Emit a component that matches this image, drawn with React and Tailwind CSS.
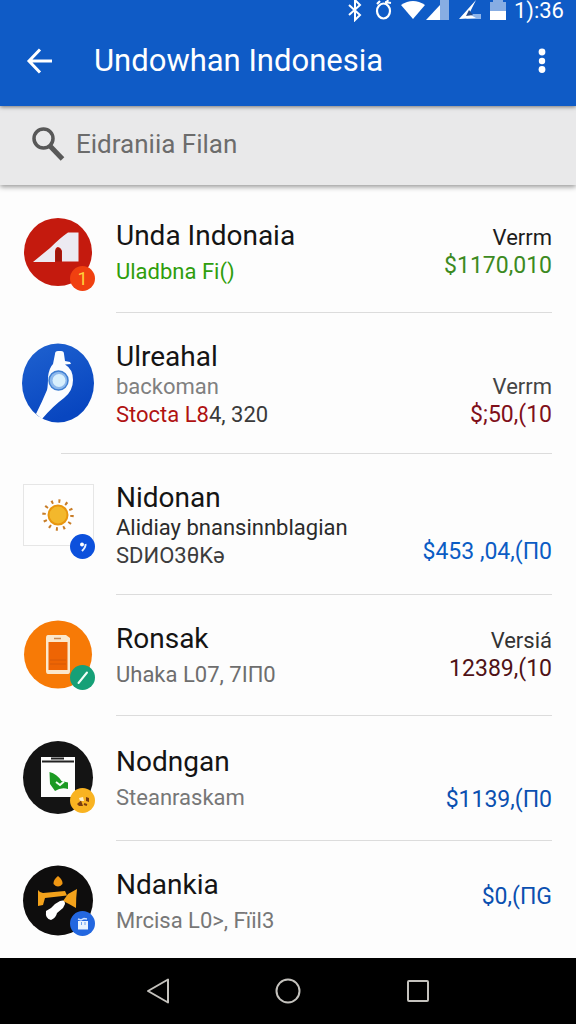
import { clsx } from "clsx";

const rows = [
  {
    id: "unda",
    name: "Unda Indonaia",
    details: [{ text: "Uladbna Fi()", className: "text-[#2f9e0c]" }],
    label: "Verrm",
    labelClass: "text-[#1c1c1c]",
    amount: "$1170,010",
    amountClass: "text-[#3c8a22]",
    sideClass: "self-start pt-3",
    rowClass: "py-5",
    avatar: <RedAvatar />,
    badge: <OneBadge />,
  },
  {
    id: "ulreahal",
    name: "Ulreahal",
    details: [
      { text: "backoman", className: "text-[#808080]" },
      { text: "Stocta L8", className: "text-[#b01212]", rest: "4, 320" },
    ],
    label: "Verrm",
    labelClass: "text-[#444444]",
    amount: "$;50,(10",
    amountClass: "text-[#80101a]",
    sideClass: "self-end",
    rowClass: "py-6",
    dividerClass: "ml-[61px]",
    avatar: <BlueAvatar />,
  },
  {
    id: "nidonan",
    name: "Nidonan",
    details: [
      { text: "Alidiay bnansinnblagian", className: "text-[#2b2b2b]" },
      { text: "SDИO3θKə", className: "text-[#3c3c3c]" },
    ],
    amount: "$453 ,04,(П0",
    amountClass: "text-[#0b5cc4]",
    sideClass: "self-end pb-1",
    rowClass: "py-6",
    avatar: <SunAvatar />,
    badge: <DotBadge />,
  },
  {
    id: "ronsak",
    name: "Ronsak",
    details: [{ text: "Uhaka L07, 7IП0", className: "text-[#6e6e6e]" }],
    label: "Versiá",
    labelClass: "text-[#333333]",
    amount: "12389,(10",
    amountClass: "text-[#4f1216]",
    sideClass: "self-start pt-3",
    rowClass: "py-5",
    avatar: <PhoneAvatar />,
    badge: <PenBadge />,
  },
  {
    id: "nodngan",
    name: "Nodngan",
    details: [{ text: "Steanraskam", className: "text-[#777777]" }],
    amount: "$1139,(П0",
    amountClass: "text-[#0b50b0]",
    sideClass: "self-end pb-1",
    rowClass: "py-[22px]",
    avatar: <LeafAvatar />,
    badge: <CoinBadge />,
  },
  {
    id: "ndankia",
    name: "Ndankia",
    details: [{ text: "Mrcisa L0>, Fïil3", className: "text-[#777777]" }],
    amount: "$0,(ПG",
    amountClass: "text-[#0b50b0]",
    sideClass: "self-center pb-2",
    rowClass: "pt-5 pb-4",
    avatar: <ToolAvatar />,
    badge: <BagBadge />,
  },
];

function Avatar({ children }) {
  return (
    <svg viewBox="0 0 72 80" className="h-20 w-18" aria-hidden="true">
      {children}
    </svg>
  );
}

function RedAvatar() {
  return (
    <Avatar>
      <circle cx="36" cy="40" r="34" fill="#c41a0e" />
      <path d="M11 50 L28 36 Q38 26 46 20.500 H56.500 V49.500 H40 V39 Q38.500 35 35.500 35 Q33 36 33 40 V50 Z" fill="#eceaf2" />
      <path d="M33.500 49.500 V39 Q36.500 33 39.500 39 V49.500 Z" fill="#9c160c" />
    </Avatar>
  );
}

function BlueAvatar() {
  return (
    <Avatar>
      <defs>
        <linearGradient id="blueFill" x1="0" y1="0" x2="0.4" y2="1">
          <stop offset="0" stopColor="#1f62d0" />
          <stop offset="1" stopColor="#0846c0" />
        </linearGradient>
      </defs>
      <ellipse cx="36" cy="40" rx="36" ry="39.500" fill="url(#blueFill)" />
      <path
        d="M33 11 Q33 8 36 8 H39 Q42 8 42 11 L43 18 L48 19 L49 21 L43 21.500 Q51 26 51 37 Q51 48 42 55 Q31 63 20 76 L14 71 Q20 59 25 47 Q26 43 26 34 Q27 25 31 21 Z"
        fill="#fbfdff"
      />
      <circle cx="36.500" cy="37.500" r="9.500" fill="#8db9ec" stroke="#3e7fd2" strokeWidth="1.500" />
      <circle cx="37" cy="37.500" r="6.500" fill="#d8f0fd" />
    </Avatar>
  );
}

function SunAvatar() {
  return (
    <Avatar>
      <rect x="1.500" y="0.5" width="70" height="61" fill="#fefefe" stroke="#e6e6e6" />
      <circle cx="36" cy="31" r="14" fill="none" stroke="#c87d28" strokeWidth="3.500" strokeDasharray="2 5.330" />
      <circle cx="36" cy="31" r="9.500" fill="#f3b82c" stroke="#e8960f" strokeWidth="2" />
    </Avatar>
  );
}

function PhoneAvatar() {
  return (
    <Avatar>
      <circle cx="36" cy="39.500" r="34" fill="#f77a06" />
      <path d="M26 20 H44 L48 23 V56 Q48 59 46 59 H26 Q24 59 24 56 V23 Q24 20 26 20 Z" fill="#fbe8cc" />
      <rect x="26.500" y="27" width="19" height="28" fill="#ee6504" />
      <path d="M32 23.500 h7" stroke="#c98a54" strokeWidth="1.500" />
      <path d="M28 45 h16 M28 49 h16" stroke="#d65a06" />
    </Avatar>
  );
}

function LeafAvatar() {
  return (
    <Avatar>
      <ellipse cx="36" cy="39.500" rx="35" ry="36.500" fill="#141414" />
      <rect x="19" y="19" width="34" height="40" fill="#fdfdfd" />
      <path d="M20 23.500 h32 M29 20.500 h13" stroke="#222" strokeWidth="2" />
      <path d="M27.500 34 Q35 36 39.500 43 L46 44.500 L46 51 Q39 49 33 53 L28 46 Z" fill="#1b9a22" />
      <path d="M34 44 L38 47 L42 43.500" fill="none" stroke="#f2fff2" strokeWidth="2" />
    </Avatar>
  );
}

function ToolAvatar() {
  return (
    <Avatar>
      <circle cx="36" cy="39.500" r="35" fill="#0e0d0d" />
      <path d="M36 15 Q41 19 40.500 23 Q36 28 31.500 23 Q31 19 36 15 Z" fill="#ef9612" />
      <path d="M16 29 Q18 32 21 32 L43 30 L45 34.500 L23 37 L21 44 L16 45 Z" fill="#f3a21b" />
      <path d="M46 33 L55 28 Q54 36 54 47 L47 43 L41 40 Z" fill="#f3a21b" />
      <path d="M38 40 Q43 38 43 43 L41 47 L35 52 Q34 57 29 59 Q23 58 24 50 Q30 47 33 43 Z" fill="#fff" />
    </Avatar>
  );
}

function Badge({ className, children }) {
  return (
    <span
      className={clsx(
        "absolute left-12 flex size-[25px] items-center justify-center rounded-full",
        className
      )}
    >
      {children}
    </span>
  );
}

function OneBadge() {
  return (
    <Badge className="top-[54px] bg-[#f04010] text-lg leading-none text-[#ffd23c]">
      1
    </Badge>
  );
}

function DotBadge() {
  return (
    <Badge className="top-[50px] bg-[#0c50dc]">
      <svg viewBox="0 0 24 24" className="size-6" aria-hidden="true">
        <circle cx="11" cy="9.500" r="2" fill="#fff" />
        <path d="M14.500 9 Q15 12 11 16" fill="none" stroke="#e6f0ff" strokeWidth="2" />
      </svg>
    </Badge>
  );
}

function PenBadge() {
  return (
    <Badge className="top-[50px] bg-[#16a077]">
      <svg viewBox="0 0 24 24" className="size-6" aria-hidden="true">
        <path d="M7.500 17 L16 6.500" stroke="#f0fff8" strokeWidth="2" strokeLinecap="round" />
      </svg>
    </Badge>
  );
}

function CoinBadge() {
  return (
    <Badge className="top-[50px] bg-[#f9b321]">
      <svg viewBox="0 0 24 24" className="size-6" aria-hidden="true">
        <path d="M8 9 L12 8 L13 12 L9 12 Z" fill="#fff0c8" />
        <path d="M6 15 L10 11.500 L12 17 H8 Z M15 8 L18 9 L18 13 L15 12 Z" fill="#7a3c10" />
        <path d="M13 15 l3 1" stroke="#7a3c10" strokeWidth="2" />
      </svg>
    </Badge>
  );
}

function BagBadge() {
  return (
    <Badge className="top-[50px] bg-[#2367e0]">
      <svg viewBox="0 0 24 24" className="size-6" aria-hidden="true">
        <path d="M7 9 H17 V17.500 H7 Z" fill="#eaf4ff" />
        <path d="M7 7 L10 8 L13 6.500 L16 7" fill="none" stroke="#cfe2ff" strokeWidth="1.500" />
        <path d="M10.500 10 v3 M14 10 v3" stroke="#6fa2ee" />
      </svg>
    </Badge>
  );
}

function StatusBar() {
  return (
    <div className="flex h-6 items-start justify-end pr-3 text-white">
      <svg viewBox="0 0 16 22" className="h-[22px] w-4" fill="none" stroke="currentColor" strokeWidth="2" aria-hidden="true">
        <path d="M2 5 L13 15 L8 20 V0 L13 5 L2 15" />
      </svg>
      <svg viewBox="0 0 18 20" className="ml-3 h-5 w-[18px]" fill="none" stroke="currentColor" strokeWidth="2.200" aria-hidden="true">
        <ellipse cx="8.500" cy="11" rx="6.500" ry="7.500" />
        <path d="M5 1 L2 4 M10 2 L16 3 M13 0 L11 4" />
      </svg>
      <svg viewBox="0 0 24 20" className="ml-2 h-5 w-6" fill="currentColor" aria-hidden="true">
        <path d="M0 5 Q12 -3 24 5 L12 19 Z" />
      </svg>
      <svg viewBox="0 0 24 20" className="ml-px h-5 w-6" fill="currentColor" aria-hidden="true">
        <path d="M14 0 H23 V20 H14 Z" opacity="0.5" />
        <path d="M0 20 L14 5 V20 Z" />
      </svg>
      <svg viewBox="0 0 24 20" className="ml-2 h-5 w-6" aria-hidden="true">
        <path d="M12 14 H23 V19 H8 Z" fill="#8db4ea" />
        <path d="M1 19 L18 0 L11 14 L18 18 Z" fill="#fff" />
        <path d="M11 10 L8 16 L15 15 Z" fill="#274a86" />
      </svg>
      <svg viewBox="0 0 16 20" className="ml-2 h-5 w-4" fill="currentColor" aria-hidden="true">
        <path d="M3 0 H13 V2 H16 V11 H0 V2 H3 Z" opacity="0.5" />
        <path d="M0 11 H16 V20 H0 Z" />
      </svg>
      <span className="ml-2 text-[22px] leading-[22px]">1):36</span>
    </div>
  );
}

function Header() {
  return (
    <header className="relative z-10 bg-[#0f5bc6] shadow-[0_1px_4px_rgba(0,0,0,0.5)]">
      <StatusBar />
      <div className="flex h-[82px] items-center pb-2 pl-6 pr-5 text-white">
        <button type="button" aria-label="Back" className="flex h-10 w-8 items-center justify-center">
          <svg viewBox="0 0 28 26" className="h-[26px] w-7" fill="none" stroke="currentColor" strokeWidth="3" aria-hidden="true">
            <path d="M14 1.500 L3 13 L14 24.500 M3 13 H26" />
          </svg>
        </button>
        <h1 className="ml-[38px] flex-1 truncate text-[31px] leading-10">Undowhan Indonesia</h1>
        <button type="button" aria-label="More options" className="flex h-10 w-7 items-center justify-center">
          <svg viewBox="0 0 8 26" className="h-[26px] w-2" fill="currentColor" aria-hidden="true">
            <circle cx="4" cy="4" r="3.400" />
            <circle cx="4" cy="13" r="3.200" />
            <circle cx="4" cy="21.500" r="3.400" />
          </svg>
        </button>
      </div>
    </header>
  );
}

function SearchBar() {
  return (
    <label className="relative flex h-[79px] items-center bg-[#e9e9ea] pb-1 pl-8 pr-6 shadow-[0_2px_5px_rgba(0,0,0,0.4)]">
      <svg viewBox="0 0 34 36" className="h-9 w-[34px]" fill="none" stroke="#585858" aria-hidden="true">
        <circle cx="11.500" cy="12.500" r="9.500" strokeWidth="3.500" />
        <path d="M18 20 L30.500 33" strokeWidth="5" />
      </svg>
      <input
        type="text"
        aria-label="Search"
        placeholder="Eidraniia Filan"
        className="ml-[10px] min-w-0 flex-1 bg-transparent text-[26px] leading-9 text-[#444444] outline-none placeholder:text-[#6c6c6c]"
      />
    </label>
  );
}

function Row({ item, last }) {
  const single = item.details.length === 1;

  return (
    <li>
      <div className={clsx("flex items-center pl-[22px] pr-6", item.rowClass)}>
        <div className="relative h-20 w-18 shrink-0">
          {item.avatar}
          {item.badge}
        </div>
        <div className={clsx("ml-[22px] min-w-0 flex-1", !single && "pt-1")}>
          <h2 className={clsx("text-[28px] text-[#141414]", single ? "mb-1 leading-9" : "leading-8")}>
            {item.name}
          </h2>
          {item.details.map((line) => (
            <p key={line.text} className={clsx("whitespace-nowrap text-[22px] leading-7", line.className)}>
              {line.text}
              {line.rest && <span className="text-[#3a3a3a]">{line.rest}</span>}
            </p>
          ))}
        </div>
        <div className={clsx("shrink-0 text-right", item.sideClass)}>
          {item.label && <p className={clsx("text-[22px] leading-7", item.labelClass)}>{item.label}</p>}
          <p className={clsx("text-[23px] leading-7", item.amountClass)}>{item.amount}</p>
        </div>
      </div>
      {!last && <hr className={clsx("mr-6 border-[#dcdcdc]", item.dividerClass || "ml-[116px]")} />}
    </li>
  );
}

function NavBar() {
  return (
    <nav className="flex h-[66px] items-center justify-center gap-0.5 bg-black text-[#c4c2bd]">
      <button type="button" aria-label="Back" className="flex h-12 w-32 items-center justify-center">
        <svg viewBox="0 0 26 26" className="size-[26px]" fill="none" stroke="currentColor" strokeWidth="2" strokeLinejoin="round" aria-hidden="true">
          <path d="M23 1.500 V24.500 L3 13 Z" />
        </svg>
      </button>
      <button type="button" aria-label="Home" className="flex h-12 w-32 items-center justify-center">
        <svg viewBox="0 0 26 26" className="size-[26px]" fill="none" stroke="currentColor" strokeWidth="2" aria-hidden="true">
          <circle cx="13" cy="13" r="11.500" />
        </svg>
      </button>
      <button type="button" aria-label="Recent apps" className="flex h-12 w-32 items-center justify-center">
        <svg viewBox="0 0 26 26" className="size-[26px]" fill="none" stroke="currentColor" strokeWidth="2" aria-hidden="true">
          <rect x="3" y="3" width="20" height="20" rx="1" />
        </svg>
      </button>
    </nav>
  );
}

export default function App() {
  return (
    <div className="flex min-h-screen flex-col bg-[#fdfdfd] font-[Roboto,sans-serif]">
      <Header />
      <SearchBar />
      <main className="flex-1 pt-[7px]">
        <ul>
          {rows.map((item, index) => (
            <Row key={item.id} item={item} last={index === rows.length - 1} />
          ))}
        </ul>
      </main>
      <NavBar />
    </div>
  );
}
